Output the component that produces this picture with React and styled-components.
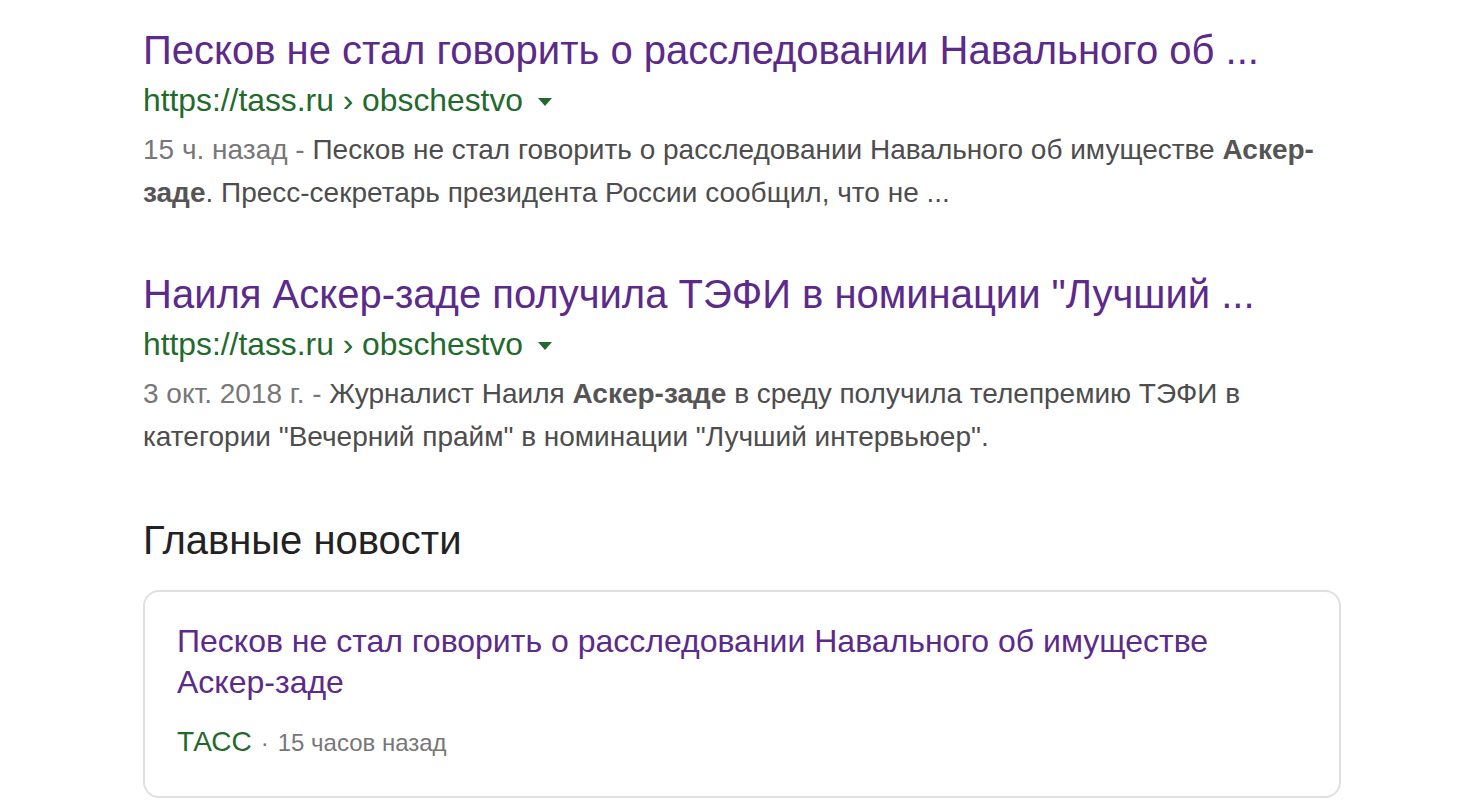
import React from "react";
import styled, { createGlobalStyle } from "styled-components";

const GlobalStyle = createGlobalStyle`
  body {
    margin: 0;
    background: #ffffff;
    font-family: "Liberation Sans", Arial, sans-serif;
  }
`;

const results = [
  {
    title: "Песков не стал говорить о расследовании Навального об ...",
    url: "https://tass.ru › obschestvo",
    date: "15 ч. назад",
    snippet: [
      "Песков не стал говорить о расследовании Навального об имуществе ",
      { b: "Аскер-заде" },
      ". Пресс-секретарь президента России сообщил, что не ...",
    ],
  },
  {
    title: "Наиля Аскер-заде получила ТЭФИ в номинации \"Лучший ...",
    url: "https://tass.ru › obschestvo",
    date: "3 окт. 2018 г.",
    snippet: [
      "Журналист Наиля ",
      { b: "Аскер-заде" },
      " в среду получила телепремию ТЭФИ в категории \"Вечерний прайм\" в номинации \"Лучший интервьюер\".",
    ],
  },
];

const App = () => {
  return (
    <>
      <GlobalStyle />
      <Page>
        {results.map((r, i) => (
          <Result key={i}>
            <Title href="#">{r.title}</Title>
            <UrlRow>
              <Url>{r.url}</Url>
              <Caret />
            </UrlRow>
            <Snippet>
              <DateText>{r.date} - </DateText>
              {r.snippet.map((s, j) =>
                typeof s === "string" ? s : <b key={j}>{s.b}</b>
              )}
            </Snippet>
          </Result>
        ))}
        <SectionHeading>Главные новости</SectionHeading>
        <NewsCard>
          <NewsTitle href="#">
            Песков не стал говорить о расследовании Навального об имуществе
            Аскер-заде
          </NewsTitle>
          <NewsMeta>
            <Source>ТАСС</Source>
            <Dot>·</Dot>
            <Time>15 часов назад</Time>
          </NewsMeta>
        </NewsCard>
      </Page>
    </>
  );
};

const Page = styled.div`
  display: flex;
  flex-direction: column;
  width: 1198px;
  padding: 24px 0 0 143px;
`;

const Result = styled.div`
  display: flex;
  flex-direction: column;
  margin-bottom: 54px;
`;

const Title = styled.a`
  font-size: 40px;
  line-height: 52px;
  color: #5b2a8a;
  text-decoration: none;
  white-space: nowrap;
`;

const UrlRow = styled.div`
  display: flex;
  align-items: center;
  height: 48px;
`;

const Url = styled.span`
  font-size: 31.8px;
  color: #1f6a2c;
`;

const Caret = styled.span`
  width: 0;
  height: 0;
  margin-left: 15px;
  margin-top: 4px;
  border-left: 7px solid transparent;
  border-right: 7px solid transparent;
  border-top: 8px solid #1f6a2c;
`;

const Snippet = styled.div`
  margin-top: 4px;
  font-size: 28px;
  line-height: 43px;
  color: #4d4d4d;

  b {
    color: #555555;
  }
`;

const DateText = styled.span`
  color: #777777;
`;

const SectionHeading = styled.h2`
  margin: 4px 0 26px;
  font-size: 40px;
  line-height: 48px;
  font-weight: normal;
  color: #222222;
`;

const NewsCard = styled.div`
  display: flex;
  flex-direction: column;
  border: 2px solid #e0e0e0;
  border-radius: 16px;
  padding: 29px 32px 37px;
`;

const NewsTitle = styled.a`
  font-size: 32px;
  line-height: 41px;
  color: #5b2a8a;
  text-decoration: none;
`;

const NewsMeta = styled.div`
  display: flex;
  align-items: baseline;
  height: 34px;
  margin-top: 22px;
  line-height: 34px;
`;

const Source = styled.span`
  font-size: 28px;
  color: #1f6a2c;
`;

const Dot = styled.span`
  font-size: 24px;
  color: #777777;
  margin: 0 9px;
`;

const Time = styled.span`
  font-size: 24px;
  color: #777777;
`;

export default App;
